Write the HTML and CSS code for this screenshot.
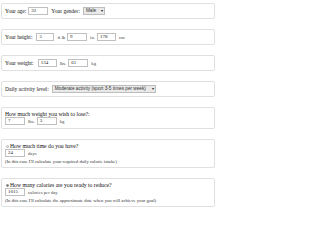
FILE: index.html
```html
<!DOCTYPE html>
<html>
<head>
<meta charset="utf-8">
<link rel="stylesheet" href="styles.css">
</head>
<body>
<div class="page">
  <div class="box">
    <div class="row">
      <span class="lbl">Your age:</span>
      <span class="in w20">32</span>
      <span class="lbl ml1">Your gender:</span>
      <span class="sel w22 ml1">Male<span class="arr">▾</span></span>
    </div>
  </div>
  <div class="box">
    <div class="row">
      <span class="lbl">Your height:</span>
      <span class="in w18 ml2">5</span>
      <span class="unit">ft &amp;</span>
      <span class="in w20">9</span>
      <span class="unit">in.</span>
      <span class="in w19">178</span>
      <span class="unit">cm</span>
    </div>
  </div>
  <div class="box">
    <div class="row">
      <span class="lbl">Your weight:</span>
      <span class="in w19 ml2">134</span>
      <span class="unit">lbs.</span>
      <span class="in w20">61</span>
      <span class="unit">kg</span>
    </div>
  </div>
  <div class="box">
    <div class="row">
      <span class="lbl">Daily activity level:</span>
      <span class="sel act ml1">Moderate activity (sport 3-5 times per week)<span class="arr">▾</span></span>
    </div>
  </div>
  <div class="box">
    <div class="title">How much weight you wish to lose?:</div>
    <div class="row">
      <span class="in w20">7</span>
      <span class="unit">lbs.</span>
      <span class="in w20">3</span>
      <span class="unit">kg</span>
    </div>
  </div>
  <div class="box">
    <div class="title"><span class="radio"></span>How much time do you have?</div>
    <div class="row">
      <span class="in w20">24</span>
      <span class="unit">days</span>
    </div>
    <div class="note">(In this case I'll calculate your required daily calorie intake)</div>
  </div>
  <div class="box">
    <div class="title"><span class="radio on"></span>How many calories are you ready to reduce?</div>
    <div class="row">
      <span class="in w20">1015</span>
      <span class="unit">calories per day</span>
    </div>
    <div class="note">(In this case I'll calculate the approximate date when you will achieve your goal)</div>
  </div>
</div>
</body>
</html>
```

FILE: styles.css
```css
html, body {
  margin: 0;
  padding: 0;
  background: #ffffff;
}
.page {
  width: 214px;
  padding: 3px 0 0 1px;
  font-family: "Liberation Serif", "Times New Roman", serif;
  font-size: 5.5px;
  color: #161616;
  display: flex;
  flex-direction: column;
  gap: 10px;
}
.box {
  border: 1px solid #e0e0e0;
  border-radius: 2px;
  padding: 3px;
  display: flex;
  flex-direction: column;
  box-shadow: 0 0 1px rgba(0, 0, 0, 0.06);
}
.row {
  display: flex;
  align-items: center;
  height: 8px;
  gap: 2px;
}
.lbl {
  white-space: nowrap;
}
.ml1 { margin-left: 1px; }
.ml2 { margin-left: 2px; }
.in {
  box-sizing: border-box;
  flex: none;
  height: 8px;
  border: 1px solid #c0c0c0;
  background: #fff;
  font-size: 5px;
  line-height: 6px;
  padding: 0 2px;
  color: #222;
  white-space: nowrap;
}
.w18 { width: 18px; }
.w19 { width: 19px; }
.w20 { width: 20px; }
.w22 { width: 22px; }
.unit {
  font-size: 4.7px;
  margin-left: 1px;
  color: #444;
  white-space: nowrap;
}
.sel {
  box-sizing: border-box;
  flex: none;
  height: 8px;
  border: 1px solid #bdbdbd;
  background: #e9e9e9;
  font-family: "Liberation Sans", Arial, sans-serif;
  font-size: 4.7px;
  line-height: 6px;
  padding: 0 1px 0 2px;
  color: #333;
  display: flex;
  justify-content: space-between;
  white-space: nowrap;
}
.act {
  width: 104px;
}
.arr {
  font-size: 4px;
  color: #222;
  padding-left: 1px;
}
.title {
  height: 6px;
  line-height: 6px;
  font-size: 5.7px;
  white-space: nowrap;
  display: flex;
  align-items: center;
  color: #111;
}
.radio {
  width: 3px;
  height: 3px;
  border: 1px solid #aaa;
  border-radius: 50%;
  margin: 0 1px 0 1px;
  box-sizing: border-box;
  background: #f4f4f4;
}
.radio.on {
  background: #777;
  border-color: #888;
}
.note {
  font-size: 4.7px;
  height: 5px;
  line-height: 5px;
  margin-top: 2px;
  white-space: nowrap;
  color: #333;
}
```
